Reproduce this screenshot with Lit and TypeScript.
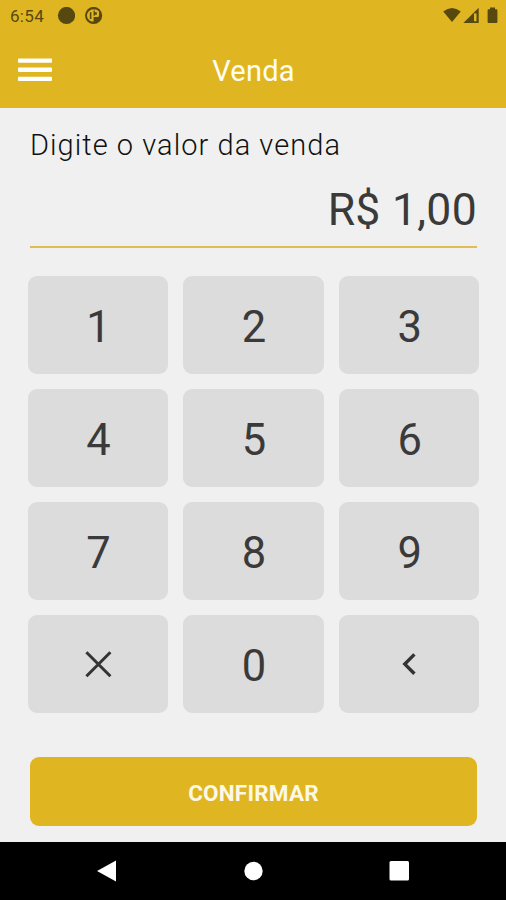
import { LitElement, html, css, svg } from "lit";
import { customElement, state } from "lit/decorators.js";

@customElement("status-bar")
class StatusBar extends LitElement {
  static styles = css`
    :host { display: flex; align-items: center; height: 32px; padding: 0 7px 0 10px; color: #57480f; }
    .time { font-size: 17px; letter-spacing: 0.3px; width: 47px; }
    svg { display: block; fill: currentColor; }
    .notes { display: flex; gap: 9px; flex: 1; }
    .signals { display: flex; }
  `;
  render() {
    return html`
      <span class="time">6:54</span>
      <span class="notes">
        <svg width="18" height="18"><circle cx="9.5" cy="8.5" r="8.6" /></svg>
        <svg width="19" height="18">
          <circle cx="9.6" cy="8.5" r="8.6" />
          <path fill="#dfb621" d="M9.6 2.4H7.6Q3 4.4 3 8.5t4.6 6.1h2V10H14q1-0.4 1-1.6V4.6Q13.6 2.9 12 2.4z" />
          <path d="M5.8 5.2h1.6v6.8H5.8zM9.6 3.6h1.2v1.6h2v2.6h-2v1H9.6z" />
        </svg>
      </span>
      <span class="signals">
        <svg width="56" height="18">
          <path d="M0.2 4.6Q9 -2.6 17.8 4.6L9 15z" />
          <path d="M35.7 0.8V15.9H20.3z" />
          <path fill="#dfb621" d="M31 6.4h2.5v7.8H31z" />
          <path d="M47 2.2V0.6h5v1.6h1.4q1 0 1 1V15q0 1-1 1h-7.8q-1 0-1-1V3.2q0-1 1-1z" />
        </svg>
      </span>
    `;
  }
}

@customElement("app-root")
class AppRoot extends LitElement {
  @state() private cents = 100;

  static styles = css`
    :host {
      display: flex; flex-direction: column; height: 900px; box-sizing: border-box;
      background: #f0f0f0; font-family: Roboto, "Noto Sans", sans-serif; color: #3a3a3a;
    }
    button { border: 0; padding: 0; margin: 0; font: inherit; color: inherit; background: none; }
    svg { display: block; }
    .top { background: #dfb621; height: 108px; }
    .bar { display: grid; grid-template-columns: 70px 1fr 70px; align-items: center; height: 76px; }
    .menu { padding-left: 18px; }
    .title { text-align: center; color: #fffdf2; font-size: 29px; letter-spacing: 0.2px; line-height: 34px; padding: 2px 0 0 1px; }
    .body { flex: 1; padding: 0 29px 0 30px; }
    .label { margin: 20px 0 0; font-size: 29px; line-height: 34px; letter-spacing: 1.05px; color: #111; font-weight: 300; }
    .amount {
      display: flex; justify-content: flex-end; align-items: center; margin-top: 9px; padding-top: 2px; box-sizing: border-box; height: 77px;
      border-bottom: 2px solid #dfbd52; font-size: 44.5px; letter-spacing: 0.3px;
    }
    .keys {
      display: grid; grid-template-columns: repeat(3, 1fr); grid-auto-rows: 98px;
      gap: 15px; margin: 28px -2.5px 0 -2.3px;
    }
    .key { display: flex; align-items: center; justify-content: center; background: #dcdcdc; border-radius: 9px; font-size: 43.5px; padding: 5px 0 0 1px; }
    .key.glyph { padding: 0 1px 0 0; }
    .confirm {
      display: block; width: 100%; height: 69px; margin-top: 44px; padding-top: 2px; border-radius: 9px;
      background: #dfb621; color: #fdf8e6; font-size: 22.5px; font-weight: 700; letter-spacing: 0.2px;
    }
    .nav { display: grid; grid-template-columns: repeat(3, 146px); justify-content: center; justify-items: center; align-items: center; height: 58px; background: #000; }
  `;

  private press(k: string) {
    if (k === "x") this.cents = 0;
    else if (k === "<") this.cents = Math.floor(this.cents / 10);
    else this.cents = this.cents * 10 + Number(k);
  }

  private face(k: string) {
    if (k !== "x" && k !== "<") return k;
    return html`<svg width="30" height="30" fill="none" stroke="#333" stroke-width="3">
      ${k === "x"
        ? svg`<path d="M3.4 3.2L27.4 27.2M27.4 3.2L3.4 27.2" />`
        : svg`<path stroke-width="3.4" d="M20.4 5.4L10.8 15.1L20.4 24.8" />`}
    </svg>`;
  }

  render() {
    const keys = ["1", "2", "3", "4", "5", "6", "7", "8", "9", "x", "0", "<"];
    return html`
      <header class="top">
        <status-bar></status-bar>
        <div class="bar">
          <button class="menu" aria-label="Menu">
            <svg width="34" height="24" fill="#fff">
              <rect y="0.4" width="34" height="4.3" rx="0.8" />
              <rect y="9.6" width="34" height="4.3" rx="0.8" />
              <rect y="18.8" width="34" height="4.3" rx="0.8" />
            </svg>
          </button>
          <div class="title">Venda</div>
        </div>
      </header>
      <main class="body">
        <p class="label">Digite o valor da venda</p>
        <div class="amount">R$ ${(this.cents / 100).toFixed(2).replace(".", ",")}</div>
        <div class="keys">
          ${keys.map((k) => html`<button class="key ${k === "x" || k === "<" ? "glyph" : ""}" @click=${() => this.press(k)}>${this.face(k)}</button>`)}
        </div>
        <button class="confirm">CONFIRMAR</button>
      </main>
      <nav class="nav">
        <svg width="22" height="24" fill="#fff"><path d="M1 12L20 1.4V22.6z" /></svg>
        <svg width="20" height="20" fill="#fff"><circle cx="10.5" cy="10" r="9.2" /></svg>
        <svg width="20" height="20" fill="#fff"><rect x="0.5" width="19.5" height="19.5" rx="1.5" /></svg>
      </nav>
    `;
  }
}
